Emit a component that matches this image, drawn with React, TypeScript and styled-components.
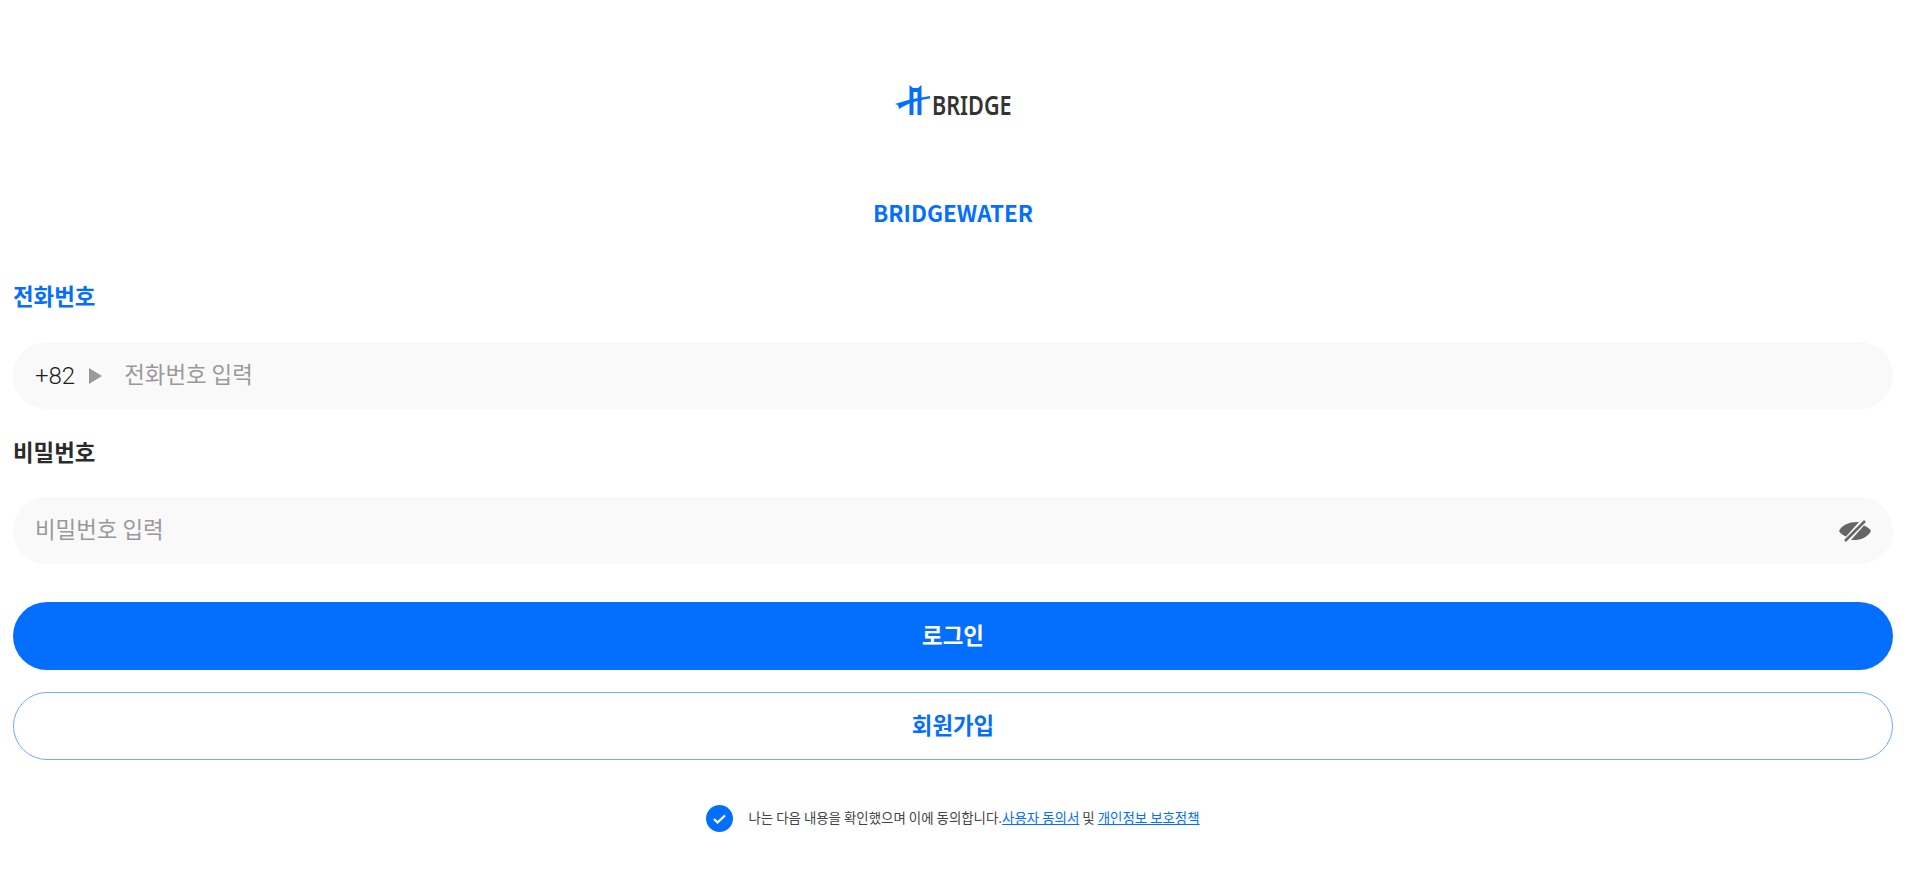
import React from 'react';
import styled, { createGlobalStyle } from 'styled-components';

const GlobalStyle = createGlobalStyle`
  html, body {
    margin: 0;
    padding: 0;
    background: #fff;
  }
  body {
    font-family: 'Roboto', 'Noto Sans CJK KR', sans-serif;
    color: #2b2b2b;
  }
  * {
    box-sizing: border-box;
  }
`;

const Page = styled.main`
  min-height: 891px;
  padding: 85px 17px 0 13px;
  display: flex;
  flex-direction: column;
`;

const LogoRow = styled.div`
  height: 30px;
  display: flex;
  justify-content: center;
  align-items: flex-end;
  gap: 2px;
`;

const LogoText = styled.span`
  font-family: 'Noto Sans', sans-serif;
  font-size: 27px;
  line-height: 18px;
  margin-bottom: 1.5px;
  font-weight: 600;
  color: #333;
  display: inline-block;
  width: 79px;
  white-space: nowrap;
  transform: scaleX(0.8);
  transform-origin: left center;
`;

const Title = styled.h1`
  margin: 81px 0 0;
  text-align: center;
  font-family: 'Noto Sans CJK KR', sans-serif;
  font-size: 22.4px;
  line-height: 32px;
  font-weight: 700;
  color: #046ffe;
`;

const Label = styled.label<{ $active?: boolean }>`
  display: block;
  margin-top: ${(p) => (p.$active ? '51px' : '26px')};
  padding-bottom: ${(p) => (p.$active ? '1px' : '0')};
  font-family: 'Noto Sans CJK KR', sans-serif;
  font-size: 22.4px;
  line-height: 32px;
  font-weight: 700;
  color: ${(p) => (p.$active ? '#046ffe' : '#2b2b2b')};
`;

const Field = styled.div`
  margin-top: 30px;
  height: 67px;
  border-radius: 34px;
  background: #f9f9f9;
  padding: 0 22px;
  display: flex;
  align-items: center;
`;

const Prefix = styled.span`
  font-family: 'Roboto', sans-serif;
  font-size: 24px;
  font-weight: 300;
  color: #1e1e1e;
`;

const Arrow = styled.span`
  width: 0;
  height: 0;
  margin: 0 22px 0 14px;
  border-left: 13px solid #999;
  border-top: 8px solid transparent;
  border-bottom: 8px solid transparent;
`;

const Placeholder = styled.span`
  flex: 1;
  padding-bottom: 5px;
  font-family: 'Noto Sans CJK KR', sans-serif;
  font-size: 22.4px;
  font-weight: 400;
  color: #999;
`;

const PrimaryButton = styled.button`
  margin-top: 38px;
  height: 68px;
  padding: 0 0 4px;
  border: 0;
  border-radius: 34px;
  background: #046ffe;
  color: #fff;
  font-family: 'Noto Sans CJK KR', sans-serif;
  font-size: 22.4px;
  font-weight: 700;
`;

const OutlineButton = styled.button`
  margin-top: 22px;
  height: 68px;
  padding: 0 0 5px;
  border: 1px solid #6fabfe;
  border-radius: 34px;
  background: #fff;
  color: #046ffe;
  font-family: 'Noto Sans CJK KR', sans-serif;
  font-size: 22.4px;
  font-weight: 700;
`;

const Agreement = styled.div`
  margin-top: 45px;
  display: flex;
  justify-content: center;
  align-items: center;
  gap: 15px;
  font-family: 'Noto Sans CJK KR', sans-serif;
  font-size: 13.44px;
  font-weight: 400;
  color: #444;
`;

const AgreementText = styled.span`
  padding-bottom: 3px;
`;

const Check = styled.span`
  width: 27px;
  height: 27px;
  border-radius: 50%;
  background: #046ffe;
  display: flex;
  align-items: center;
  justify-content: center;
`;

const TermLink = styled.a`
  color: #046ffe;
  text-decoration: underline;
`;

const App: React.FC = () => (
  <>
    <GlobalStyle />
    <Page>
      <LogoRow>
        <svg width="35" height="30" viewBox="0 0 35 30">
          <path d="M14.500 0l3.500 3H23L26.500 0v30h-4V7h-4v23h-4z" fill="#046ffe" />
          <path d="M0 19C10 15.500 24 12.500 35 11V13.500C26 14.500 14 17.500 4 24L3 20z" fill="#046ffe" />
        </svg>
        <LogoText>BRIDGE</LogoText>
      </LogoRow>
      <Title>BRIDGEWATER</Title>
      <Label $active>전화번호</Label>
      <Field>
        <Prefix>+82</Prefix>
        <Arrow />
        <Placeholder>전화번호 입력</Placeholder>
      </Field>
      <Label>비밀번호</Label>
      <Field>
        <Placeholder>비밀번호 입력</Placeholder>
        <svg width="32" height="22" viewBox="0 0 32 22">
          <path d="M0 11C3 5 10 1.500 20 2L7 16.500C4 15.500 1.500 13.500 0 11z" fill="#666" />
          <path d="M32 11C29 17 22 20.500 12 20L25 5.500C28 6.500 30.500 8.500 32 11z" fill="#666" />
          <path d="M26 1L6 21" stroke="#666" strokeWidth="2.500" />
        </svg>
      </Field>
      <PrimaryButton>로그인</PrimaryButton>
      <OutlineButton>회원가입</OutlineButton>
      <Agreement>
        <Check>
          <svg width="15" height="12" viewBox="0 0 15 12">
            <path d="M2 6l3.500 3.500L13 2.500" fill="none" stroke="#fff" strokeWidth="2.200" />
          </svg>
        </Check>
        <AgreementText>
          나는 다음 내용을 확인했으며 이에 동의합니다.<TermLink>사용자 동의서</TermLink> 및{' '}
          <TermLink>개인정보 보호정책</TermLink>
        </AgreementText>
      </Agreement>
    </Page>
  </>
);

export default App;
